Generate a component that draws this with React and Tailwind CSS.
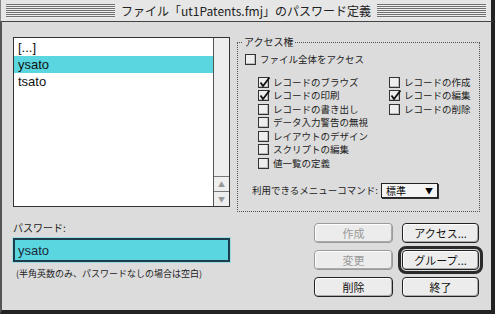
import React from 'react'

const jp = "font-['Noto_Sans_CJK_JP','Noto_Sans',sans-serif]"

function Box({ checked }) {
  return (
    <span className="relative w-[11px] h-[11px] shrink-0 border border-[#333] bg-[#eeeeee] shadow-[inset_-1px_-1px_0_#bbb]">
      {checked && (
        <svg className="absolute -left-[1px] -top-[2px]" width="13" height="13" viewBox="0 0 13 13">
          <path d="M2.5 6.5 L5 10 L11.5 1.5" stroke="#111" strokeWidth="1.8" fill="none" />
        </svg>
      )}
    </span>
  )
}

function Check({ label, checked }) {
  return (
    <div className="flex items-center gap-[4px] h-[13.5px]">
      <Box checked={checked} />
      <span className="text-[9.5px] leading-none text-[#222] whitespace-nowrap">{label}</span>
    </div>
  )
}

function Btn({ children, disabled, isDefault }) {
  return (
    <button
      className={`h-[20px] rounded-[4px] border bg-[#ececec] text-[11px] leading-none shadow-[inset_-1px_-1px_0_#aaa,inset_1px_1px_0_#fff] ${
        disabled ? 'border-[#9a9a9a] text-[#9a9a9a]' : 'border-[#222] text-[#111]'
      } ${isDefault ? 'outline-[3px] outline-offset-[1px] outline-[#2a2a2a] outline-solid' : ''}`}
    >
      {children}
    </button>
  )
}

function Stripes() {
  return <div className="flex-1 h-[14px] bg-[repeating-linear-gradient(to_bottom,#707070_0px,#707070_1px,#efefef_1px,#efefef_2px)]" />
}

export default function App() {
  const col1 = [
    ['レコードのブラウズ', true],
    ['レコードの印刷', true],
    ['レコードの書き出し', false],
    ['データ入力警告の無視', false],
    ['レイアウトのデザイン', false],
    ['スクリプトの編集', false],
    ['値一覧の定義', false],
  ]
  const col2 = [
    ['レコードの作成', false],
    ['レコードの編集', true],
    ['レコードの削除', false],
  ]

  return (
    <div className={`w-[495px] h-[314px] bg-[#dcdcdc] flex flex-col overflow-hidden ${jp}`}>
      {/* title bar */}
      <div className="h-[22px] shrink-0 flex items-center px-[5px] bg-[#e6e6e6] border-b border-[#444] border-l border-l-[#888] border-r-[4px] border-r-[#222]">
        <Stripes />
        <span className="px-[6px] text-[12px] leading-none text-[#222] whitespace-nowrap">
          ファイル「ut1Patents.fmj」のパスワード定義
        </span>
        <Stripes />
      </div>

      {/* body */}
      <div className="flex-1 flex pt-[15px] pl-[11px] gap-[7px] border-l-2 border-l-[#555] border-r-[4px] border-r-[#222] border-b-[4px] border-b-[#222]">
        {/* left column */}
        <div className="w-[217px] flex flex-col">
          <div className="h-[170px] flex border border-[#333] bg-white">
            <div className="flex-1 flex flex-col pt-[1px] text-[13px] leading-none text-[#111] font-['Liberation_Sans',sans-serif]">
              <div className="h-[17px] flex items-center px-[4px]">[...]</div>
              <div className="h-[17px] flex items-center px-[4px] bg-[#5ad6e0]">ysato</div>
              <div className="h-[17px] flex items-center px-[4px]">tsato</div>
            </div>
            <div className="w-[16px] flex flex-col justify-end border-l border-[#555] bg-[#eeeeee]">
              <div className="h-[15px] flex items-center justify-center border-t border-[#777] text-[7px] text-[#999]">▲</div>
              <div className="h-[15px] flex items-center justify-center border-t border-[#777] text-[7px] text-[#999]">▼</div>
            </div>
          </div>

          <div className="mt-[14px] h-[12px] flex items-center text-[10px] text-[#222]">パスワード:</div>
          <div className="mt-[5px] h-[24px] border-2 border-[#1d3d4d] bg-[#5ad6e0] shadow-[0_0_0_1px_#9fdce6] flex items-center px-[3px] text-[13px] leading-none text-[#1a2a3a] font-['Liberation_Sans',sans-serif]">
            ysato
          </div>
          <div className="mt-[6px] h-[12px] flex items-center pl-[3px] text-[9px] text-[#222] whitespace-nowrap">
            (半角英数のみ、パスワードなしの場合は空白)
          </div>
        </div>

        {/* right column */}
        <div className="w-[243px] flex flex-col">
          <fieldset className="h-[175px] border border-dotted border-[#555] px-[7px] pt-[0px]">
            <legend className="ml-[-2px] px-[1px] text-[10px] leading-none text-[#222]">アクセス権</legend>
            <div className="mt-[6px]">
              <Check label="ファイル全体をアクセス" checked={false} />
            </div>
            <div className="mt-[9px] ml-[13px] flex">
              <div className="w-[131px] flex flex-col">
                {col1.map(([l, c]) => (
                  <Check key={l} label={l} checked={c} />
                ))}
              </div>
              <div className="flex flex-col">
                {col2.map(([l, c]) => (
                  <Check key={l} label={l} checked={c} />
                ))}
              </div>
            </div>
            <div className="mt-[13px] ml-[7px] flex items-center">
              <span className="text-[9.5px] leading-none text-[#222] whitespace-nowrap">利用できるメニューコマンド:</span>
              <div className="ml-[3px] w-[57px] h-[15px] flex items-center justify-between px-[4px] border border-[#222] bg-[#f4f4f4] shadow-[1px_1px_0_#333]">
                <span className="text-[10px] leading-none">標準</span>
                <span className="text-[8px] leading-none">▼</span>
              </div>
            </div>
          </fieldset>

          <div className="mt-[11px] ml-[77px] grid grid-cols-[79px_77px] gap-x-[9px] gap-y-[7px]">
            <Btn disabled>作成</Btn>
            <Btn>アクセス...</Btn>
            <Btn disabled>変更</Btn>
            <Btn isDefault>グループ...</Btn>
            <Btn>削除</Btn>
            <Btn>終了</Btn>
          </div>
        </div>
      </div>
    </div>
  )
}
